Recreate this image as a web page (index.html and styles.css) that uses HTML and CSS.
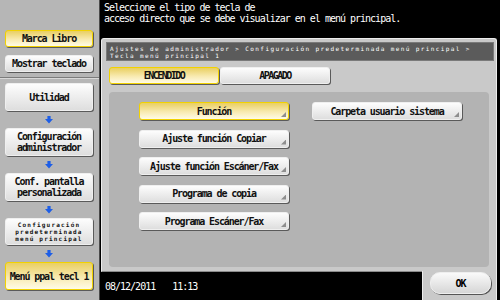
FILE: index.html
```html
<!DOCTYPE html>
<html lang="es">
<head>
    <meta charset="UTF-8">
    <title>Tecla menú principal 1</title>
    <link rel="stylesheet" href="styles.css">
</head>
<body>
    <div class="screen">
        <aside class="side">
            <div class="side-top">
                <div class="key key-on">Marca Libro</div>
                <div class="key">Mostrar teclado</div>
            </div>
            <div class="side-flow">
                <div class="key step">Utilidad</div>
                <div class="arrow"></div>
                <div class="key step">Configuración<br>administrador</div>
                <div class="arrow"></div>
                <div class="key step">Conf. pantalla<br>personalizada</div>
                <div class="arrow"></div>
                <div class="key step small">Configuración<br>predeterminada<br>menú principal</div>
                <div class="arrow"></div>
                <div class="key step key-on">Menú ppal tecl 1</div>
            </div>
        </aside>

        <main class="main">
            <div class="msg">Seleccione el tipo de tecla de<br>acceso directo que se debe visualizar en el menú principal.</div>

            <div class="panel">
                <div class="crumb">Ajustes de administrador &gt; Configuración predeterminada menú principal &gt;<br>Tecla menú principal 1</div>

                <div class="tabs">
                    <div class="tab key-on">ENCENDIDO</div>
                    <div class="tab">APAGADO</div>
                </div>

                <div class="inner">
                    <div class="key opt key-on">Función</div>
                    <div class="key opt">Ajuste función Copiar</div>
                    <div class="key opt">Ajuste función Escáner/Fax</div>
                    <div class="key opt">Programa de copia</div>
                    <div class="key opt">Programa Escáner/Fax</div>
                    <div class="key opt">Carpeta usuario sistema</div>
                </div>
            </div>

            <div class="foot">
                <div class="date"><span>08/12/2011</span><span>11:13</span></div>
                <div class="ok-area"><div class="ok">OK</div></div>
            </div>
        </main>
    </div>
</body>
</html>
```

FILE: styles.css
```css
:root {
    --sideGrey: #b6b6b6;
    --panelGrey: #c9c9c9;
    --innerGrey: #b3b3b3;
    --yellow: #f2d200;
}

body {
    margin: 0;
    background: #000;
    font-family: 'DejaVu Sans Mono', monospace;
}

.screen {
    display: flex;
    width: 500px;
    height: 300px;
    overflow: hidden;
}

/* Left column */
.side {
    width: 99px;
    background: var(--sideGrey);
    border-right: 1px solid #4a4a4a;
    display: flex;
    flex-direction: column;
}

.side-top {
    height: 78px;
    box-sizing: border-box;
    padding: 30px 0 0 5px;
    display: flex;
    flex-direction: column;
    gap: 8px;
    border-bottom: 1px solid #7c7c7c;
    box-shadow: 0 1px 0 #d8d8d8;
}

.side-flow {
    padding: 5px 0 0 5px;
    display: flex;
    flex-direction: column;
}

.key {
    position: relative;
    box-sizing: border-box;
    width: 88px;
    height: 17px;
    display: flex;
    align-items: center;
    justify-content: center;
    text-align: center;
    font-size: 10px;
    font-weight: bold;
    letter-spacing: -1.1px;
    color: #111;
    background: linear-gradient(#fdfdfd, #dedede);
    border: 1px solid #efefef;
    border-radius: 3px;
    box-shadow: 1px 1px 0 #5a5a5a;
}

.key-on {
    background: linear-gradient(#e9cf62, #f8eab0 55%, #fffbe6);
    border-color: var(--yellow);
}

.step {
    height: 28px;
    line-height: 11px;
}

.step.small {
    font-size: 6px;
    letter-spacing: 1.2px;
    line-height: 7px;
    height: 27px;
}

.arrow {
    height: 17px;
    width: 88px;
    display: flex;
    justify-content: center;
    align-items: center;
}

.arrow::before {
    content: "";
    width: 8px;
    height: 8px;
    background: #1e5ee6;
    clip-path: polygon(30% 0, 70% 0, 70% 45%, 100% 45%, 50% 100%, 0 45%, 30% 45%);
}

/* Main area */
.main {
    flex: 1;
    display: flex;
    flex-direction: column;
    background: #000;
}

.msg {
    height: 38px;
    box-sizing: border-box;
    padding: 2px 4px;
    color: #fff;
    font-size: 10px;
    letter-spacing: -1px;
    line-height: 11px;
}

.panel {
    margin: 0 3px 0 1px;
    height: 234px;
    box-sizing: border-box;
    padding: 3px 2px 0 4px;
    background: var(--panelGrey);
    border: 1px solid #ececec;
    border-bottom: 1px solid #8a8a8a;
    border-radius: 3px 3px 0 0;
}

.crumb {
    height: 19px;
    box-sizing: border-box;
    padding: 2px 3px;
    background: #5b5b5b;
    border: 1px solid #7a7a7a;
    color: #fff;
    font-size: 6px;
    letter-spacing: 1.4px;
    line-height: 7px;
}

.tabs {
    display: flex;
    gap: 1px;
    margin: 6px 0 0 3px;
}

.tab {
    box-sizing: border-box;
    width: 110px;
    height: 17px;
    display: flex;
    align-items: center;
    justify-content: center;
    font-size: 10px;
    font-weight: bold;
    letter-spacing: -1.5px;
    color: #111;
    background: linear-gradient(#fdfdfd, #dedede);
    border: 1px solid #efefef;
    border-radius: 3px;
    box-shadow: 1px 1px 0 #5a5a5a;
}

.tab.key-on {
    background: linear-gradient(#e9cf62, #f8eab0 55%, #fffbe6);
    border-color: var(--yellow);
}

.inner {
    margin: 8px 0 0 3px;
    width: 380px;
    height: 175px;
    box-sizing: border-box;
    padding: 10px 0 0 30px;
    background: var(--innerGrey);
    border-radius: 4px;
    display: grid;
    grid-template-rows: repeat(5, 18px);
    grid-template-columns: 150px 150px;
    grid-auto-flow: column;
    row-gap: 9.5px;
    column-gap: 23px;
}

.opt {
    width: 150px;
    height: 18px;
}

.opt::after {
    content: "";
    position: absolute;
    right: 2px;
    bottom: 2px;
    width: 5px;
    height: 5px;
    background: #8e8e8e;
    clip-path: polygon(100% 0, 100% 100%, 0 100%);
}

/* Bottom bar */
.foot {
    flex: 1;
    display: flex;
    margin: 0 3px 0 1px;
}

.date {
    flex: 1;
    display: flex;
    align-items: center;
    gap: 17px;
    padding-left: 4px;
    color: #fff;
    font-size: 10px;
    letter-spacing: -1px;
}

.ok-area {
    width: 75px;
    background: var(--panelGrey);
    border-left: 1px solid #ececec;
    border-right: 1px solid #ececec;
    padding: 1px 0 0 7px;
    box-sizing: border-box;
    margin-top: -1px;
}

.ok {
    width: 59px;
    height: 20px;
    display: flex;
    align-items: center;
    justify-content: center;
    font-size: 10px;
    font-weight: bold;
    letter-spacing: -1px;
    background: linear-gradient(#fafafa, #d6d6d6);
    border: 1px solid #eeeeee;
    border-radius: 10px;
    box-shadow: 1px 1px 0 #555;
}
```
